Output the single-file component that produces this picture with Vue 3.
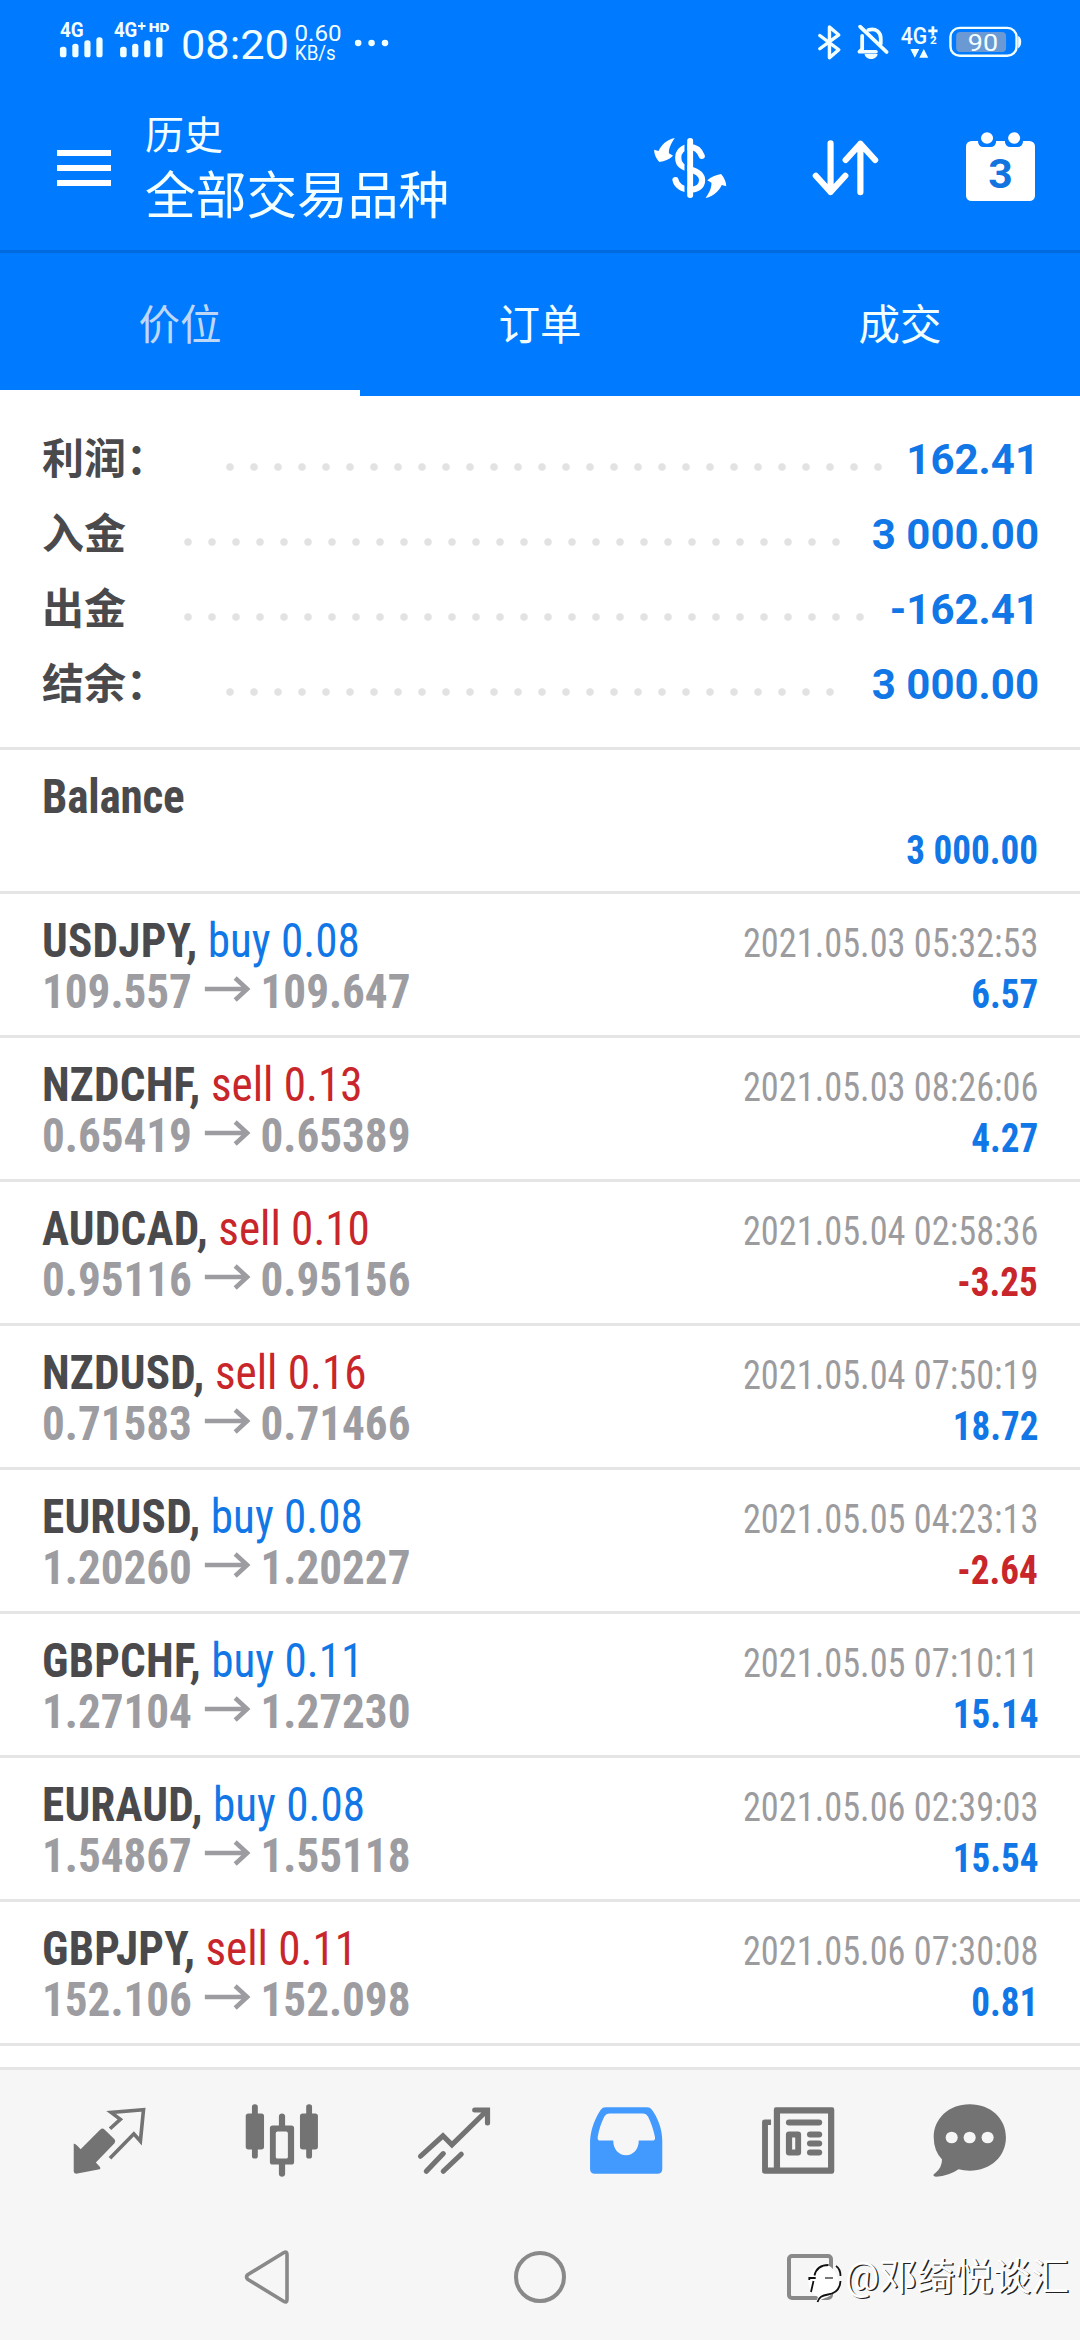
<script setup>
const tabs = ['价位', '订单', '成交']

const summary = [
  { label: '利润：', value: '162.41', dots: 28 },
  { label: '入金', value: '3 000.00', dots: 28 },
  { label: '出金', value: '-162.41', dots: 29 },
  { label: '结余：', value: '3 000.00', dots: 26 },
]

const deals = [
  { symbol: 'USDJPY', side: 'buy', lot: '0.08', from: '109.557', to: '109.647', time: '2021.05.03 05:32:53', profit: '6.57' },
  { symbol: 'NZDCHF', side: 'sell', lot: '0.13', from: '0.65419', to: '0.65389', time: '2021.05.03 08:26:06', profit: '4.27' },
  { symbol: 'AUDCAD', side: 'sell', lot: '0.10', from: '0.95116', to: '0.95156', time: '2021.05.04 02:58:36', profit: '-3.25' },
  { symbol: 'NZDUSD', side: 'sell', lot: '0.16', from: '0.71583', to: '0.71466', time: '2021.05.04 07:50:19', profit: '18.72' },
  { symbol: 'EURUSD', side: 'buy', lot: '0.08', from: '1.20260', to: '1.20227', time: '2021.05.05 04:23:13', profit: '-2.64' },
  { symbol: 'GBPCHF', side: 'buy', lot: '0.11', from: '1.27104', to: '1.27230', time: '2021.05.05 07:10:11', profit: '15.14' },
  { symbol: 'EURAUD', side: 'buy', lot: '0.08', from: '1.54867', to: '1.55118', time: '2021.05.06 02:39:03', profit: '15.54' },
  { symbol: 'GBPJPY', side: 'sell', lot: '0.11', from: '152.106', to: '152.098', time: '2021.05.06 07:30:08', profit: '0.81' },
]
</script>

<template>
  <div class="screen">
    <header class="top">
      <div class="status">
        <svg class="signals" viewBox="150 45 1000 180" width="344" height="60" preserveAspectRatio="none" fill="#f2ffff">
          <text x="173" y="110" font-size="62" font-weight="700" textLength="69" lengthAdjust="spacingAndGlyphs">4G</text>
          <text x="330" y="110" font-size="62" font-weight="700" textLength="68" lengthAdjust="spacingAndGlyphs">4G</text>
          <path d="M400 78h22M411 67v22" stroke="#f2ffff" stroke-width="6" />
          <text x="431" y="96" font-size="41" font-weight="900" textLength="60" lengthAdjust="spacingAndGlyphs">HD</text>
          <g>
            <rect x="173" y="140" width="19" height="32" rx="8" /><rect x="209" y="131" width="18" height="41" rx="8" />
            <rect x="244" y="121" width="18" height="51" rx="8" /><rect x="279" y="112" width="18" height="60" rx="8" />
            <rect x="348" y="140" width="19" height="32" rx="8" /><rect x="383" y="131" width="18" height="41" rx="8" />
            <rect x="418" y="121" width="18" height="51" rx="8" /><rect x="453" y="112" width="18" height="60" rx="8" />
          </g>
          <text x="525" y="177" font-size="124" textLength="314" lengthAdjust="spacingAndGlyphs">08:20</text>
          <text x="855" y="123" font-size="65" textLength="137" lengthAdjust="spacingAndGlyphs">0.60</text>
          <text x="856" y="180" font-size="58" textLength="119" lengthAdjust="spacingAndGlyphs">KB/s</text>
          <circle cx="1040" cy="129" r="9.500" /><circle cx="1079" cy="129" r="9.500" /><circle cx="1118" cy="129" r="9.500" />
        </svg>
        <svg class="system" viewBox="795 60 610 130" width="210" height="43" preserveAspectRatio="none" fill="#f2ffff">
          <g fill="none" stroke="#f2ffff" stroke-linecap="round" stroke-linejoin="round">
            <path d="M809 107L864 150L837 174V81L864 105L809 147" stroke-width="10" />
            <path d="M932 108V148L924 156H972M950 90C973 83 986 98 986 116V132" stroke-width="11" />
            <path d="M926 80L1003 157" stroke-width="11" />
            <rect x="1188.500" y="84" width="192" height="84" rx="27" stroke-width="7" />
          </g>
          <path d="M939 163H977C974 183 942 183 939 163Z" />
          <text x="1044" y="132" font-size="73" font-weight="500" textLength="77" lengthAdjust="spacingAndGlyphs">4G</text>
          <path d="M1124 93h27M1137.500 79v28" stroke="#f2ffff" stroke-width="8" />
          <text x="1129" y="132" font-size="34" font-weight="700">2</text>
          <path d="M1072 148h26l-13 26zM1098 174h26l-13-26z" />
          <rect x="1205" y="96" width="145" height="61" rx="12" fill="#6a99d4" />
          <path d="M1385 108Q1394 112 1394 126T1385 146Z" />
          <text x="1239" y="153" font-size="73" textLength="88" lengthAdjust="spacingAndGlyphs">90</text>
        </svg>
      </div>
      <div class="toolbar">
        <div class="menu"><i></i><i></i><i></i></div>
        <div class="titles">
          <div class="sub">历史</div>
          <div class="main">全部交易品种</div>
        </div>
        <svg class="currency" viewBox="325 408 220 192" width="76" height="64" preserveAspectRatio="none">
          <path d="M469 468C462 449 450 441 435 441C412 441 401 457 401 474C401 499 420 503 435 508C458 514 470 525 470 541C470 560 455 569 435 569C412 569 396 556 393 540" fill="none" stroke="#fff" stroke-width="18" stroke-linecap="round" />
          <path d="M419 425h9v160h-9z" fill="#007aff" />
          <rect x="427" y="414" width="17" height="180" rx="8" fill="#fff" />
          <path id="swap-arrow" d="M391 414C366 418 351 438 344 453L331 449C331 462 337 475 346 486C362 483 375 478 386 467L374 460C373 446 380 430 391 414Z" fill="#fff" />
          <use href="#swap-arrow" transform="rotate(180 435.500 504)" />
        </svg>
        <svg class="sort" viewBox="785 415 210 178" width="72" height="60" preserveAspectRatio="none" fill="none" stroke="#fff" stroke-width="18" stroke-linecap="round" stroke-linejoin="round">
          <path d="M845 431V575M802 527L845 575L888 527M932 576V432M889 480L932 432L975 480" />
        </svg>
        <svg class="calendar" viewBox="1237 393 200 210" width="69" height="70" preserveAspectRatio="none">
          <rect x="1237" y="423" width="200" height="180" rx="16" fill="#fff" />
          <path d="M1272 420V427Q1274 441 1288 441H1308Q1322 441 1324 427V420ZM1350 420V427Q1352 441 1366 441H1386Q1400 441 1402 427V420Z" fill="#007aff" />
          <circle cx="1298" cy="414" r="17.500" fill="#fff" /><circle cx="1376.500" cy="414" r="17.500" fill="#fff" />
          <text x="1337" y="565" font-size="124" font-weight="700" text-anchor="middle" fill="#1274df">3</text>
        </svg>
      </div>
    </header>

    <nav class="tabs">
      <div v-for="(tab, i) in tabs" :key="tab" class="tab" :class="{ active: i === 0 }">{{ tab }}</div>
    </nav>

    <section class="summary">
      <div v-for="row in summary" :key="row.label" class="sum-row">
        <span class="label">{{ row.label }}</span>
        <span class="dots" :style="{ width: row.dots * 24 + 'px' }"></span>
        <span class="value">{{ row.value }}</span>
      </div>
    </section>

    <main class="list">
      <div class="deal balance">
        <div class="line"><span class="left symbol">Balance</span></div>
        <div class="line"><span></span><span class="right profit">3 000.00</span></div>
      </div>
      <div v-for="deal in deals" :key="deal.time" class="deal">
        <div class="line">
          <span class="left"><b class="symbol">{{ deal.symbol }},</b> <span class="order" :class="deal.side">{{ deal.side }} {{ deal.lot }}</span></span>
          <span class="right time">{{ deal.time }}</span>
        </div>
        <div class="line">
          <span class="left prices">
            <span class="price">{{ deal.from }}</span>
            <svg class="arrow" viewBox="0 0 46 26" width="49" height="26" preserveAspectRatio="none" fill="none" stroke="#9c9ca1" stroke-width="4.500">
              <path d="M0 13H42M30.500 2L42.500 13L30.500 24" />
            </svg>
            <span class="price">{{ deal.to }}</span>
          </span>
          <span class="right profit" :class="{ loss: deal.profit.startsWith('-') }">{{ deal.profit }}</span>
        </div>
      </div>
    </main>

    <footer class="bottom">
      <div class="icons">
        <svg viewBox="210 215 220 230" width="76" height="77" preserveAspectRatio="none">
          <path d="M215 340Q218 337 235 356L292 297Q298 291 304 297L333 326Q338 332 333 338L279 396L291 409Q294 414 290 416L222 429Q215 429 215 422Z" fill="#737373" />
          <path d="M320 295L350 267L323 246L417 238L408 332L389 310L320 383" fill="none" stroke="#737373" stroke-width="10.500" />
        </svg>
        <svg viewBox="709 215 220 230" width="76" height="77" preserveAspectRatio="none" fill="#737373">
          <rect x="714" y="249" width="53" height="108" rx="8" /><rect x="732" y="222" width="17" height="162" rx="8" />
          <rect x="871" y="249" width="52" height="108" rx="8" /><rect x="889" y="222" width="17" height="162" rx="8" />
          <path fill-rule="evenodd" d="M792 285H846Q854 285 854 293V394Q854 402 846 402H792Q784 402 784 394V293Q784 285 792 285ZM806 303Q801 303 801 308V379Q801 384 806 384H831Q836 384 836 379V308Q836 303 831 303Z" />
          <path d="M810 288V257Q811 249 819 249T828 257V288ZM810 400V430Q811 438 819 438T828 430V400Z" />
        </svg>
        <svg viewBox="1208 215 220 230" width="76" height="77" preserveAspectRatio="none" fill="none" stroke="#737373" stroke-width="15" stroke-linecap="round">
          <path d="M1221 377L1286 316L1312 343L1409 245M1378 239H1415V278M1238 422L1287 369M1287 422L1339 371" />
        </svg>
        <svg viewBox="139 215 220 230" width="76" height="77" preserveAspectRatio="none" fill="#429aff">
          <path fill-rule="evenodd" d="M145 330C147 295 161 260 176 238Q181 231 190 231H310Q319 231 324 238C340 260 354 295 354 330V415Q354 429 340 429H159Q145 429 145 415ZM202 249Q191 249 186 259C178 276 170 298 167 320Q166 330 174 330H212C212 356 228 374 249 374C270 374 286 356 286 330H326Q334 330 333 320C329 298 321 276 313 259Q308 249 297 249Z" />
        </svg>
        <svg viewBox="639 215 220 230" width="76" height="77" preserveAspectRatio="none" fill="#737373">
          <path fill-rule="evenodd" d="M685 231H848Q854 231 854 238V422Q854 429 848 429H652Q645 429 645 422V275Q645 267 653 267H671V284H662V411H679V238Q679 231 685 231ZM697 249V411H836V249Z" />
          <rect x="714" y="267" width="105" height="18" rx="9" />
          <path fill-rule="evenodd" d="M723 303H749Q758 303 758 312V366Q758 375 749 375H723Q714 375 714 366V312Q714 303 723 303ZM732 321V357H741V321Z" />
          <rect x="775" y="303" width="44" height="18" rx="9" /><rect x="775" y="330" width="44" height="18" rx="9" /><rect x="775" y="357" width="44" height="18" rx="9" />
        </svg>
        <svg viewBox="1139 215 220 230" width="76" height="77" preserveAspectRatio="none">
          <path d="M1248 222C1310 222 1353 265 1353 321C1353 377 1310 420 1248 420Q1231 420 1216 416Q1188 436 1151 438C1142 438 1141 432 1148 428Q1168 412 1168 387Q1144 360 1144 321C1144 265 1187 222 1248 222Z" fill="#737373" />
          <g fill="#f6f6f6"><circle cx="1196" cy="321" r="17.500" /><circle cx="1248" cy="321" r="17.500" /><circle cx="1300" cy="321" r="17.500" /></g>
        </svg>
      </div>
      <div class="sysnav">
        <svg class="back" width="46" height="54" viewBox="0 0 46 54" fill="none" stroke="#898989" stroke-width="3.600" stroke-linejoin="round">
          <path d="M43 4.500V49.500Q43 53 40 51.500L4 29.500Q1 27 4 24.500L40 2.500Q43 1 43 4.500Z" />
        </svg>
        <span class="home"></span>
        <span class="recent"></span>
      </div>
    </footer>

    <div class="watermark">
      <svg width="42" height="46" viewBox="0 0 42 46">
        <path d="M21 4A17.500 17.500 0 0 1 22 38L13 42L15 37A17.500 17.500 0 0 1 21 4Z" fill="#fff" />
        <path d="M11.500 15.500C13 9 18 5 25.500 5M6.300 20V18H12.700M10.500 21L8 32M33 6C36 8 37.500 12 37.500 16M37.500 21C37 29 32 33.500 25 34.500C19 35.500 16 37 14.500 42" fill="none" stroke="#111" stroke-width="1.800" />
        <path d="M22 18H30" fill="none" stroke="#777" stroke-width="2" />
      </svg>
      <span>@邓绮悦谈汇</span>
    </div>
  </div>
</template>

<style>
body { margin: 0; background: #fff; }
</style>

<style scoped>
.screen {
  position: relative;
  display: flex;
  flex-direction: column;
  width: 1080px;
  height: 2340px;
  overflow: hidden;
  background: #fff;
  color: #4a4a4d;
  font-family: Roboto, "Noto Sans CJK SC", sans-serif;
}
svg { display: block; flex: none; }
svg text { font-family: Roboto, sans-serif; }

.top {
  height: 250px;
  box-sizing: border-box;
  background: #007aff;
}
.status {
  display: flex;
  justify-content: space-between;
  align-items: flex-start;
  height: 107px;
  padding: 0 55px 0 52px;
}
.signals { margin-top: 15px; }
.system { margin-top: 20px; }
.toolbar {
  display: flex;
  align-items: flex-start;
  padding-left: 57px;
}
.menu {
  display: flex;
  flex-direction: column;
  gap: 9px;
  width: 54px;
  margin-top: 43px;
}
.menu i { height: 6px; background: #fff; }
.titles {
  width: 508px;
  margin-left: 34px;
  padding-top: 1px;
  color: #f4ffff;
}
.sub { font-size: 39px; line-height: 56px; }
.main { font-size: 50.700px; line-height: 65px; }
.currency { margin-top: 29px; margin-left: -1px; }
.sort { margin-left: 82px; margin-top: 31px; }
.calendar { margin-left: 84px; margin-top: 24px; }

.tabs {
  display: flex;
  height: 146px;
  box-sizing: border-box;
  border-top: 3px solid #006be0;
  background: #007aff;
}
.tab {
  flex: 1;
  box-sizing: border-box;
  padding-top: 2px;
  border-bottom: 6px solid transparent;
  color: #f2ffff;
  font-size: 41.500px;
  line-height: 142px;
  height: 143px;
  text-align: center;
}
.tab.active { color: #bfd7f7; border-bottom-color: #fff; }

.summary {
  padding: 26px 41px 25px 42px;
  border-bottom: 3px solid #e5e5e5;
}
.sum-row {
  display: flex;
  height: 75px;
  font-size: 42px;
  line-height: 75px;
}
.label { font-weight: 700; }
.dots {
  height: 24px;
  margin: 33px 0 0 50px;
  background: radial-gradient(circle, #e2e2e3 0 3.200px, transparent 4.400px) 0 0 / 24px 24px;
}
.value {
  margin-left: auto;
  color: #1177e6;
  font-weight: 700;
}

.list { flex: none; height: 1317px; overflow: hidden; }
.deal {
  height: 144px;
  box-sizing: border-box;
  padding: 21px 42px 0;
  border-bottom: 3px solid #e5e5e5;
}
.line {
  display: flex;
  justify-content: space-between;
  align-items: baseline;
  height: 51px;
  font-size: 48px;
  line-height: 51px;
  white-space: nowrap;
  font-stretch: 75%;
}
/* Extra-narrow condensed face */
.left { transform: scaleX(0.94); transform-origin: left; }
.right { font-size: 40px; transform: scaleX(0.928); transform-origin: right; }
.right.time { transform: scaleX(0.908); }
.balance .profit { padding-top: 3px; }
.symbol, .price, .profit { font-weight: 700; }
.symbol { letter-spacing: 0.250px; }
.balance .symbol { letter-spacing: -0.200px; }
.prices { display: flex; color: #9c9ca1; }
.arrow { margin: 10px 11px 0 13px; }
.buy, .profit { color: #1177e6; }
.sell, .profit.loss { color: #c8262b; }
.time { color: #9c9c9f; }

.bottom {
  height: 273px;
  box-sizing: border-box;
  border-top: 3px solid #e5e5e5;
  background: #f6f6f6;
}
.icons {
  display: flex;
  justify-content: space-around;
  padding: 32px 24px 0;
}
.sysnav {
  display: flex;
  align-items: center;
  height: 54px;
  margin-top: 71px;
  padding-left: 244px;
}
.home {
  width: 52px;
  height: 52px;
  box-sizing: border-box;
  margin-left: 224px;
  border: 4px solid #898989;
  border-radius: 50%;
}
.recent {
  width: 46px;
  height: 46px;
  box-sizing: border-box;
  margin-left: 221px;
  border: 4px solid #898989;
  border-radius: 5px;
}
.watermark {
  position: absolute;
  top: 2260px;
  left: 803px;
  display: flex;
  align-items: flex-start;
  color: #fff;
  font-size: 38px;
  line-height: 36px;
  white-space: nowrap;
  text-shadow: 1.400px 1.400px 0 #222;
}
.watermark span { margin-top: -1px; }
</style>
